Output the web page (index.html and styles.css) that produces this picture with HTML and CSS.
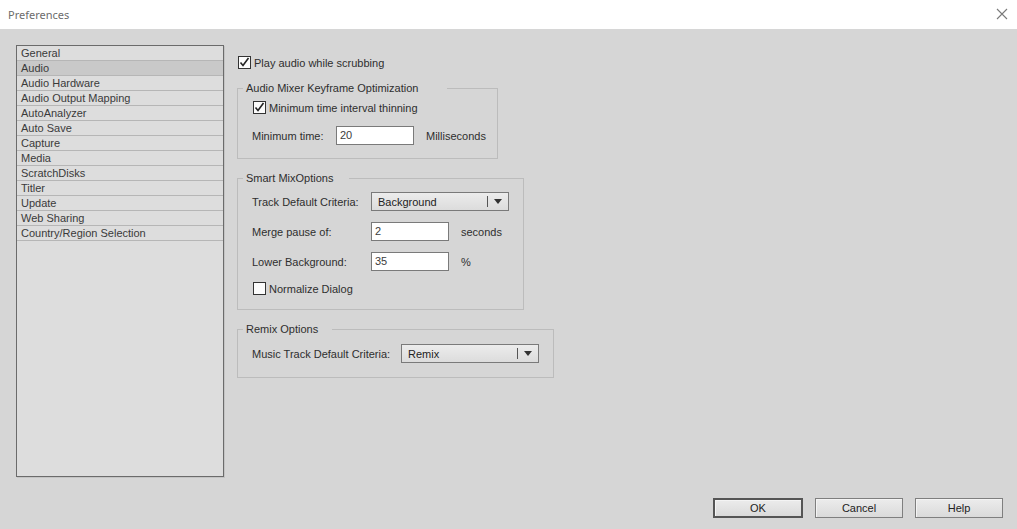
FILE: index.html
```html
<!DOCTYPE html>
<html>
<head>
<meta charset="utf-8">
<link rel="stylesheet" href="styles.css">
</head>
<body>
<div class="dialog">
  <div class="titlebar">
    <span class="title">Preferences</span>
    <svg class="close" width="12" height="12" viewBox="0 0 12 12"><path d="M1 1 L11 11 M11 1 L1 11" stroke="#7a7a7a" stroke-width="1.1" fill="none"/></svg>
  </div>
  <div class="main">
    <ul class="list">
      <li>General</li>
      <li class="sel">Audio</li>
      <li>Audio Hardware</li>
      <li>Audio Output Mapping</li>
      <li>AutoAnalyzer</li>
      <li>Auto Save</li>
      <li>Capture</li>
      <li>Media</li>
      <li>ScratchDisks</li>
      <li>Titler</li>
      <li>Update</li>
      <li>Web Sharing</li>
      <li>Country/Region Selection</li>
    </ul>
    <div class="content">
      <label class="check top"><span class="box checked"><svg width="11" height="11" viewBox="0 0 11 11"><path d="M1.5 5.5 L4 8.5 L9.5 1" stroke="#222" stroke-width="1.6" fill="none"/></svg></span>Play audio while scrubbing</label>

      <fieldset class="group g1">
        <legend class="l1">Audio Mixer Keyframe Optimization</legend>
        <label class="check"><span class="box checked"><svg width="11" height="11" viewBox="0 0 11 11"><path d="M1.5 5.5 L4 8.5 L9.5 1" stroke="#222" stroke-width="1.6" fill="none"/></svg></span>Minimum time interval thinning</label>
        <div class="row r-min">
          <span class="lbl w84">Minimum time:</span>
          <span class="input">20</span>
          <span class="unit">Milliseconds</span>
        </div>
      </fieldset>

      <fieldset class="group g2">
        <legend class="l2">Smart MixOptions</legend>
        <div class="row">
          <span class="lbl w119">Track Default Criteria:</span>
          <span class="select"><span class="val">Background</span><span class="sep"></span><span class="arrow"></span></span>
        </div>
        <div class="row">
          <span class="lbl w119">Merge pause of:</span>
          <span class="input">2</span>
          <span class="unit">seconds</span>
        </div>
        <div class="row">
          <span class="lbl w119">Lower Background:</span>
          <span class="input">35</span>
          <span class="unit">%</span>
        </div>
        <label class="check c-norm"><span class="box"></span>Normalize Dialog</label>
      </fieldset>

      <fieldset class="group g3">
        <legend class="l3">Remix Options</legend>
        <div class="row">
          <span class="lbl w149">Music Track Default Criteria:</span>
          <span class="select"><span class="val">Remix</span><span class="sep"></span><span class="arrow"></span></span>
        </div>
      </fieldset>
    </div>
  </div>
  <div class="buttons">
    <button class="btn default">OK</button>
    <button class="btn">Cancel</button>
    <button class="btn">Help</button>
  </div>
</div>
</body>
</html>
```

FILE: styles.css
```css
* { box-sizing: border-box; }
html, body { margin: 0; padding: 0; }
body {
  width: 1017px;
  height: 529px;
  overflow: hidden;
  font-family: "Liberation Sans", Arial, sans-serif;
  font-size: 11px;
  color: #2e2e2e;
  background: #d6d6d6;
}
.dialog {
  width: 1017px;
  height: 529px;
  display: flex;
  flex-direction: column;
}
.titlebar {
  height: 29px;
  background: #ffffff;
  display: flex;
  align-items: center;
  justify-content: space-between;
  padding: 0 8px 1px 8px;
}
.title {
  font-family: "Noto Sans", "Liberation Sans", sans-serif;
  font-size: 11px;
  color: #6c6c6c;
}
.close { margin-right: 1px; }
.main {
  flex: 1;
  display: flex;
  padding: 16px 0 0 16px;
}
.list {
  list-style: none;
  margin: 0;
  padding: 0;
  width: 208px;
  height: 432px;
  border: 1px solid #6b6b6b;
  background: #dddddd;
  box-shadow: 1px 1px 0 #c4c4c4;
}
.list li {
  height: 15px;
  line-height: 14px;
  padding-left: 4px;
  border-bottom: 1px solid #b6b6b6;
  color: #3a3a3a;
}
.list li.sel { background: #c9c9c9; }
.content {
  margin-left: 13px;
  display: flex;
  flex-direction: column;
  align-items: flex-start;
}
.check {
  display: flex;
  align-items: center;
  height: 13px;
  white-space: nowrap;
}
.check.top { margin: 11px 0 0 1px; }
.box {
  width: 13px;
  height: 13px;
  border: 1px solid #333;
  background: #fbfbfb;
  margin-right: 3px;
  display: flex;
  align-items: center;
  justify-content: center;
}
.group {
  margin: 0;
  border: 1px solid #bcbcbc;
  padding: 0 0 0 14px;
}
.group legend {
  margin-left: -9px;
  padding: 0 0 0 3px;
  height: 14px;
  line-height: 14px;
  color: #2e2e2e;
}
.g1 { width: 261px; height: 78px; margin-top: 12px; }
.g1 .l1 { padding-right: 29px; }
.g2 { width: 287px; height: 139px; margin-top: 12px; }
.g2 .l2 { padding-right: 16px; }
.g3 { width: 317px; height: 56px; margin-top: 12px; }
.g3 .l3 { padding-right: 14px; }
.g1 .check { margin: 6px 0 0 1px; }
.r-min { margin-top: 12px; }
.row {
  display: flex;
  align-items: center;
  height: 19px;
}
.g2 .row { margin-top: 11px; }
.g2 .row:first-of-type { margin-top: 7px; }
.g3 .row { margin-top: 8px; }
.lbl { white-space: nowrap; }
.w84 { width: 84px; }
.w119 { width: 119px; }
.w149 { width: 149px; }
.input {
  width: 78px;
  height: 19px;
  border: 1px solid #7a7a7a;
  background: #ffffff;
  padding-left: 3px;
  line-height: 17px;
  color: #3c3c3c;
}
.unit { margin-left: 12px; }
.select {
  width: 138px;
  height: 19px;
  border: 1px solid #7a7a7a;
  background: linear-gradient(#ececec, #dcdcdc);
  display: flex;
  align-items: center;
  padding-left: 6px;
}
.select .val { flex: 1; color: #222; }
.select .sep {
  width: 1px;
  height: 11px;
  background: #555;
  margin-right: 6px;
}
.select .arrow {
  width: 0;
  height: 0;
  border-left: 4px solid transparent;
  border-right: 4px solid transparent;
  border-top: 5px solid #333;
  margin-right: 6px;
}
.c-norm { margin: 11px 0 0 1px; }
.buttons {
  display: flex;
  justify-content: flex-end;
  gap: 12px;
  padding: 0 14px 11px 0;
}
.btn {
  width: 88px;
  height: 20px;
  font-family: "Liberation Sans", Arial, sans-serif;
  font-size: 11px;
  color: #222;
  border: 1px solid #7f7f7f;
  background: linear-gradient(#ececec, #dadada);
  padding: 0;
  box-shadow: inset 1px 1px 0 #f4f4f4;
}
.btn.default {
  width: 90px;
  border: 2px solid #555;
}
```
